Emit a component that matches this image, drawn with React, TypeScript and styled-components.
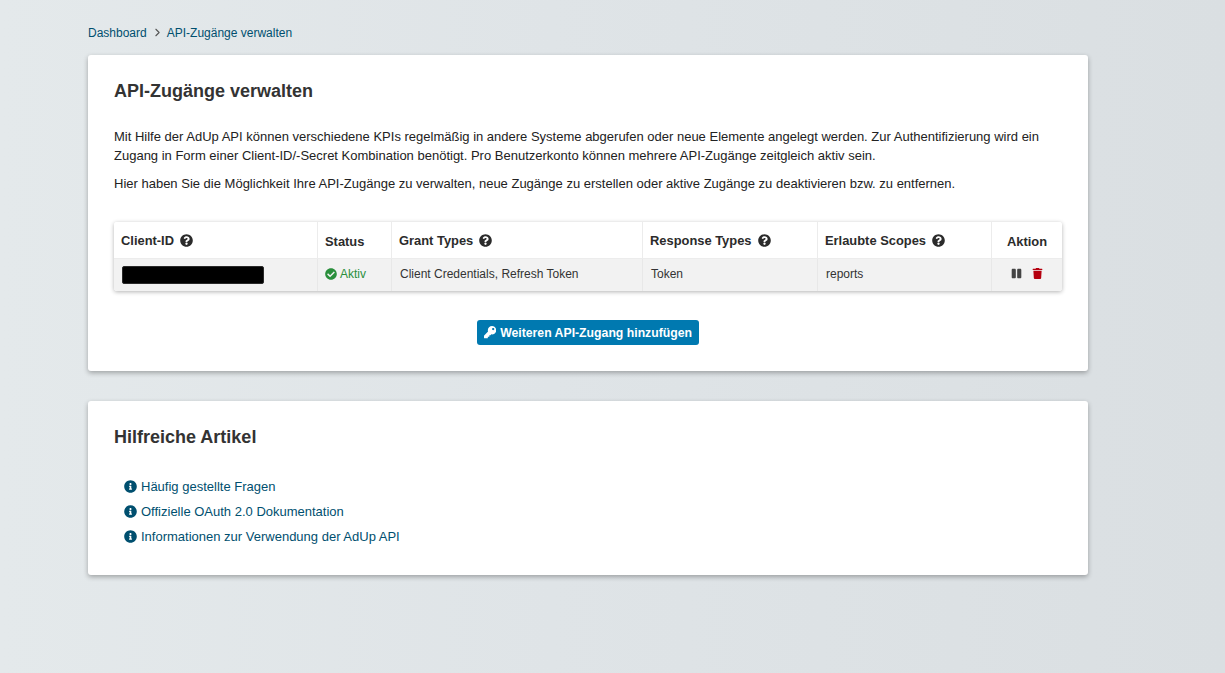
import React from 'react';
import styled, { createGlobalStyle } from 'styled-components';
import { ChevronRight } from 'lucide-react';
import {
  FaQuestionCircle,
  FaCheckCircle,
  FaKey,
  FaPause,
  FaTrash,
  FaInfoCircle,
} from 'react-icons/fa';

const GlobalStyle = createGlobalStyle`
  html, body {
    margin: 0;
    padding: 0;
    height: 100%;
    background: linear-gradient(90deg, #e4e9eb 0%, #dfe4e7 45%, #dadfe2 100%);
    overflow: hidden;
  }
  body {
    font-family: "Liberation Sans", Arial, sans-serif;
    color: #333;
  }
`;

const columns = [
  { title: 'Client-ID', help: true },
  { title: 'Status', help: false },
  { title: 'Grant Types', help: true },
  { title: 'Response Types', help: true },
  { title: 'Erlaubte Scopes', help: true },
  { title: 'Aktion', help: false },
];

const links = [
  'Häufig gestellte Fragen',
  'Offizielle OAuth 2.0 Dokumentation',
  'Informationen zur Verwendung der AdUp API',
];

const App: React.FC = () => {
  return (
    <Page>
      <GlobalStyle />
      <Breadcrumb>
        <Crumb>Dashboard</Crumb>
        <Separator><ChevronRight size={13} strokeWidth={2} /></Separator>
        <Crumb>API-Zugänge verwalten</Crumb>
      </Breadcrumb>

      <Card>
        <Heading>API-Zugänge verwalten</Heading>
        <Intro>
          Mit Hilfe der AdUp API können verschiedene KPIs regelmäßig in andere Systeme abgerufen oder neue Elemente
          angelegt werden. Zur Authentifizierung wird ein Zugang in Form einer Client-ID/-Secret Kombination benötigt.
          Pro Benutzerkonto können mehrere API-Zugänge zeitgleich aktiv sein.
        </Intro>
        <IntroSecond>
          Hier haben Sie die Möglichkeit Ihre API-Zugänge zu verwalten, neue Zugänge zu erstellen oder aktive Zugänge
          zu deaktivieren bzw. zu entfernen.
        </IntroSecond>

        <Table>
          <HeadRow>
            {columns.map((col) => (
              <HeadCell key={col.title} $center={col.title === 'Aktion'} $plain={!col.help}>
                {col.title}
                {col.help && <HelpIcon />}
              </HeadCell>
            ))}
          </HeadRow>
          <BodyRow>
            <RedactedCell><Redacted /></RedactedCell>
            <StatusCell>
              <StatusText><FaCheckCircle /> Aktiv</StatusText>
            </StatusCell>
            <BodyCell>Client Credentials, Refresh Token</BodyCell>
            <BodyCell>Token</BodyCell>
            <BodyCell>reports</BodyCell>
            <ActionCell>
              <PauseIcon />
              <TrashIcon />
            </ActionCell>
          </BodyRow>
        </Table>

        <ButtonRow>
          <PrimaryButton>
            <FaKey />
            Weiteren API-Zugang hinzufügen
          </PrimaryButton>
        </ButtonRow>
      </Card>

      <LowerCard>
        <Heading>Hilfreiche Artikel</Heading>
        <LinkList>
          {links.map((link) => (
            <LinkItem key={link}>
              <FaInfoCircle />
              {link}
            </LinkItem>
          ))}
        </LinkList>
      </LowerCard>
    </Page>
  );
};

const Page = styled.div`
  width: 1000px;
  padding: 25px 0 0 88px;
`;

const Breadcrumb = styled.nav`
  display: flex;
  align-items: center;
  height: 15px;
  font-size: 12px;
  color: #004f6f;
`;

const Crumb = styled.span`
  color: #004f6f;
`;

const Separator = styled.span`
  display: flex;
  margin: 0 3px 0 4px;
  color: #555;
`;

const Card = styled.section`
  margin-top: 15px;
  height: 316px;
  box-sizing: border-box;
  padding: 26px 26px 0;
  background: #fff;
  border-radius: 3px;
  box-shadow: 0 2px 5px rgba(0, 0, 0, 0.3);
`;

const LowerCard = styled(Card)`
  margin-top: 30px;
  height: 174px;
`;

const Heading = styled.h2`
  margin: 0;
  font-size: 18px;
  line-height: 20px;
  font-weight: 700;
  color: #333;
`;

const Intro = styled.p`
  margin: 26px 0 0;
  font-size: 13px;
  line-height: 19px;
  color: #222;
`;

const IntroSecond = styled(Intro)`
  margin-top: 9px;
`;

const Table = styled.div`
  margin-top: 29px;
  width: 948px;
  border-radius: 3px;
  overflow: hidden;
  box-shadow: 0 1px 4px rgba(0, 0, 0, 0.3);
`;

const HeadRow = styled.div`
  display: grid;
  grid-template-columns: 204px 74px 251px 175px 174px 70px;
  height: 37px;
  background: #fff;
  border-bottom: 1px solid #ececec;
  box-sizing: border-box;
`;

const BodyRow = styled(HeadRow)`
  height: 32px;
  background: #f2f2f2;
  border-bottom: 0;
`;

const HeadCell = styled.div<{ $center?: boolean; $plain?: boolean }>`
  display: flex;
  align-items: center;
  justify-content: ${(p) => (p.$center ? 'center' : 'flex-start')};
  padding: ${(p) => (p.$plain ? '2px 0 0 7px' : '0 0 0 7px')};
  font-size: 12.9px;
  font-weight: 700;
  color: #2b2b2b;
  border-right: 1px solid #ececec;

  &:last-child {
    border-right: 0;
    padding-left: 0;
  }
`;

const HelpIcon = styled(FaQuestionCircle)`
  margin-left: 6px;
  font-size: 13px;
`;

const BodyCell = styled.div`
  display: flex;
  align-items: center;
  padding: 0 0 3px 8px;
  font-size: 12px;
  color: #333;
  border-right: 1px solid #e8e8e8;
`;

const RedactedCell = styled(BodyCell)`
  padding-bottom: 1px;
`;

const StatusCell = styled(BodyCell)`
  padding-left: 7px;
`;

const ActionCell = styled(BodyCell)`
  justify-content: center;
  gap: 10px;
  padding-left: 0;
  border-right: 0;
`;

const Redacted = styled.div`
  width: 142px;
  height: 18px;
  background: #000;
  border: 1px solid #2a2a2a;
  border-radius: 2px;
  box-sizing: border-box;
`;

const StatusText = styled.span`
  display: flex;
  align-items: center;
  gap: 3px;
  color: #2a8f3c;
`;

const PauseIcon = styled(FaPause)`
  font-size: 11px;
  color: #444;
`;

const TrashIcon = styled(FaTrash)`
  font-size: 11px;
  color: #b5000f;
`;

const ButtonRow = styled.div`
  display: flex;
  justify-content: center;
  margin-top: 29px;
`;

const PrimaryButton = styled.button`
  display: flex;
  align-items: center;
  gap: 4px;
  height: 25px;
  padding: 0 7px;
  border: 0;
  border-radius: 3px;
  background: #0079b0;
  color: #fff;
  font-family: inherit;
  font-size: 12.25px;
  font-weight: 700;
`;

const LinkList = styled.ul`
  display: flex;
  flex-direction: column;
  gap: 6px;
  margin: 30px 0 0;
  padding: 0 0 0 10px;
  list-style: none;
`;

const LinkItem = styled.li`
  display: flex;
  align-items: center;
  gap: 4px;
  height: 19px;
  font-size: 13px;
  color: #004f6f;
`;

export default App;
